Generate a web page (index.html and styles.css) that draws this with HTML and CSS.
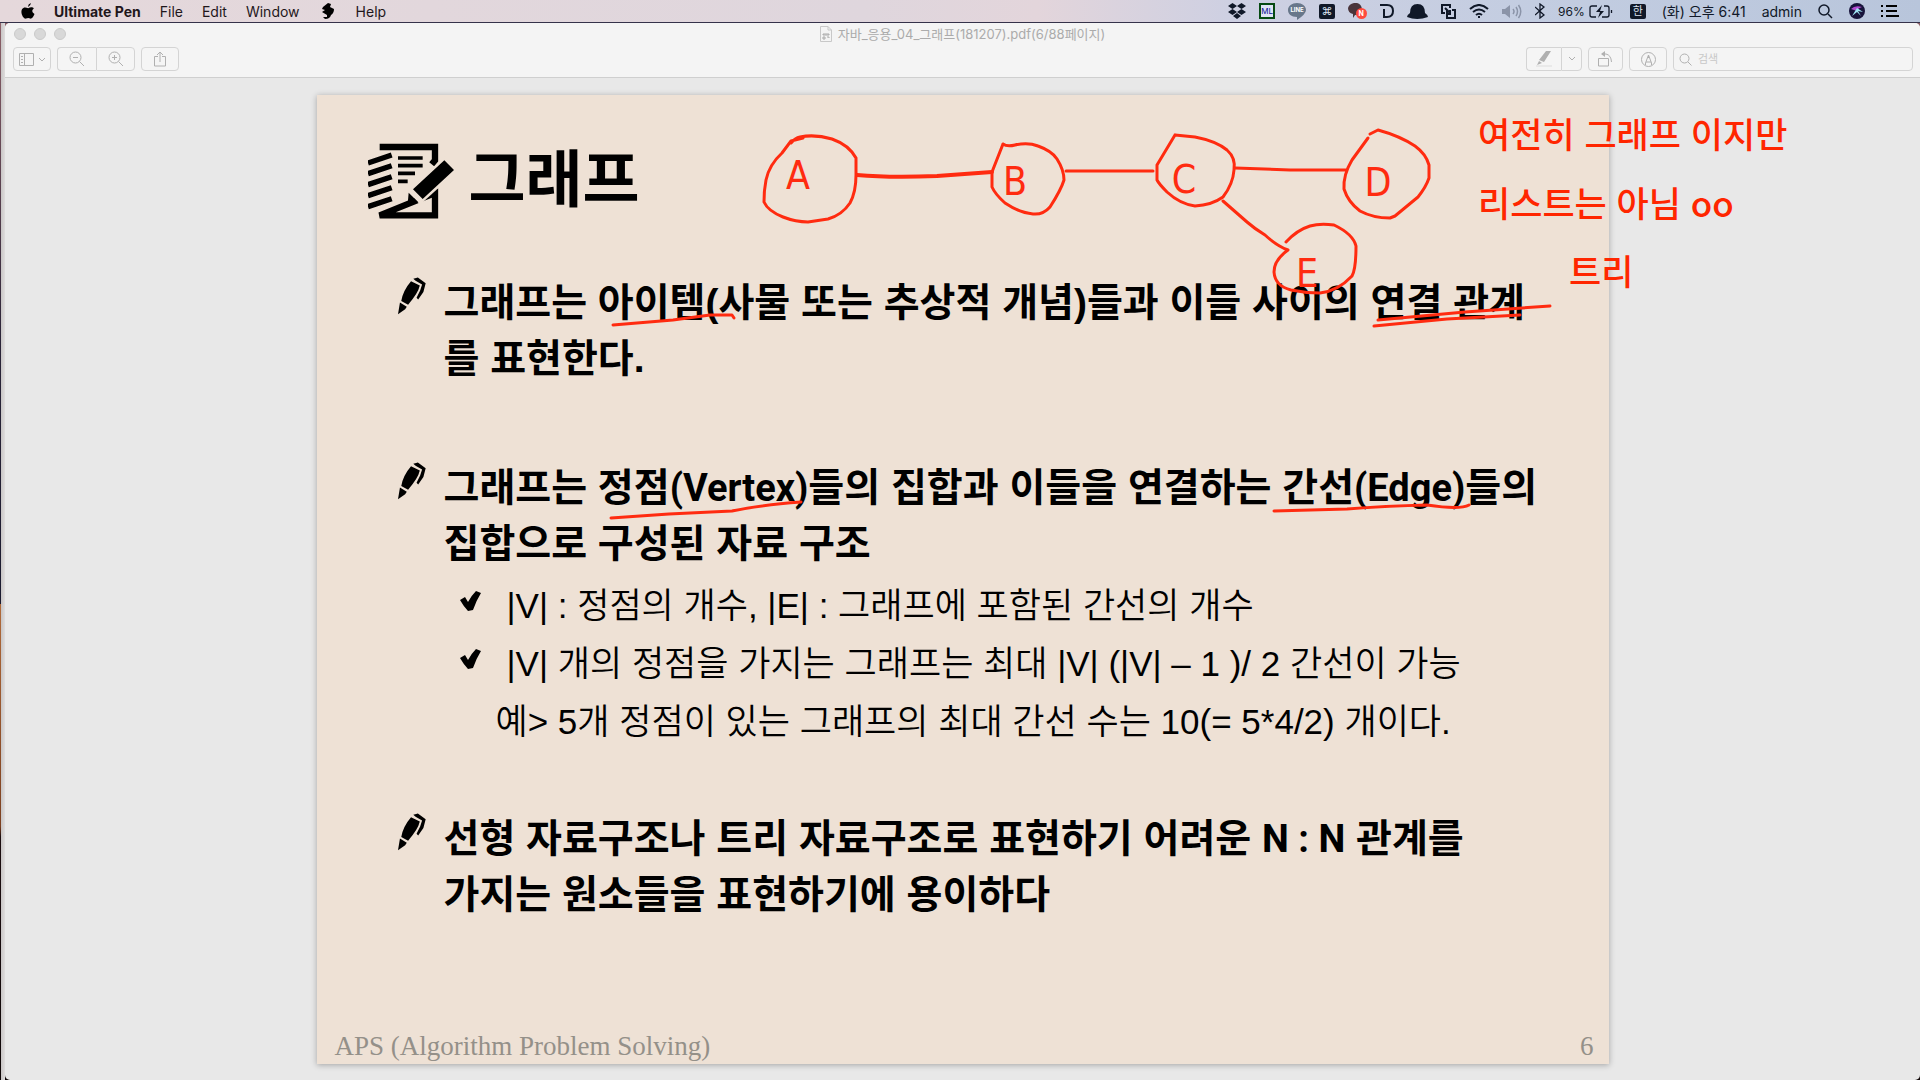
FILE: index.html
```html
<!DOCTYPE html>
<html lang="ko">
<head>
<meta charset="utf-8">
<meta name="viewport" content="width=device-width, initial-scale=1">
<title>자바_응용_04_그래프(181207).pdf</title>
<link rel="stylesheet" href="styles.css">
</head>
<body>
<svg class="defs" aria-hidden="true">
  <symbol id="pen" viewBox="174 500 86 114">
    <path d="M214 512 241 525Q236 548 205 584L184 572Q190 540 214 512ZM221 504 235 500 259 518 252 545 236 568 231 562 242 540 248 522 228 510ZM180 577 201 590 196 598 174 613Z"/>
  </symbol>
  <symbol id="check" viewBox="0 0 21 20">
    <path d="M0 9 5 6 8 11Q11 5 16 0L21 2Q16 10 13 19L8 20Q4 16 0 9Z"/>
  </symbol>
</svg>

<header class="menubar">
  <nav class="menus" aria-label="메뉴">
    <a href="#" aria-label="Apple"><svg width="14" height="16" viewBox="0 0 14 16"><path d="M9.8 0Q10 2.600 7 4 6.800 1.400 9.800 0ZM12.800 5.400Q9.300 8.200 13.500 11 11.500 16 9.300 15.600 7.200 14.600 5 15.600C2.500 16.500-1 9.600 1 6.300 2.700 3.600 5 4.500 7.200 5.200 9 4.300 11.500 3.800 12.800 5.400Z"/></svg></a>
    <a href="#" class="app">Ultimate Pen</a>
    <a href="#">File</a>
    <a href="#">Edit</a>
    <a href="#">Window</a>
    <a href="#" class="brush" aria-label="Pen"><svg width="12" height="16" viewBox="0 0 12 16"><path d="M1 4 6 0 9 1 8 4 12 6Q12 10 9 12 8 16 3 16L1 14 5 14 5 12 0 9 3 7 0 6Z"/></svg></a>
    <a href="#">Help</a>
  </nav>
  <div class="status">
    <div class="tray">
      <svg width="18" height="16" viewBox="0 0 18 16"><path d="M4.500 0 9 3 4.500 6 0 3ZM13.500 0 18 3 13.500 6 9 3ZM4.500 6 9 9 4.500 12 0 9ZM13.500 6 18 9 13.500 12 9 9ZM9 10 13 13 9 16 5 13Z"/></svg>
      <span class="ml">ML</span>
      <span class="line"><svg width="18" height="17" viewBox="0 0 18 17"><path d="M9 0C14 0 18 3 18 7Q18 11 9 17V14C3 14 0 11 0 7S4 0 9 0Z" fill="#68778a"/></svg><b>LINE</b></span>
      <span class="cmd">⌘</span>
      <span class="talk"><svg width="19" height="17" viewBox="0 0 19 17"><path d="M6 0Q13-1 14 6 13 12 7 12L5 15V11Q0 10 0 5 1 1 6 0Z" fill="#49343a"/><circle cx="13.500" cy="10.500" r="5.500" fill="#ff4a3d"/></svg><b>N</b></span>
      <svg width="14" height="14" viewBox="0 0 14 14" fill="none" stroke="#101828" stroke-width="2"><path d="M0 1H7Q13 1 13 7T7 13H4V5"/></svg>
      <svg width="21" height="15" viewBox="0 0 21 15"><path d="M3 9Q3 0 10.500 0T18 9Q21 11 21 13 10 17 0 13 0 11 3 9Z"/></svg>
      <svg width="15" height="15" viewBox="0 0 15 15" fill="none" stroke="#101828" stroke-width="2"><path d="M4 9H1V1H9V4M6 6V14H14V6H11M4 4 9 9M9 6V10H5"/></svg>
      <svg width="20" height="15" viewBox="0 0 20 15" fill="none" stroke="#101828" stroke-width="2"><path d="M1 5Q10-3 19 5M4 8Q10 3 16 8M7 11Q10 8.500 13 11M9 13H11"/></svg>
      <svg width="20" height="15" viewBox="0 0 20 15" fill="none" stroke="#8b94a8" stroke-width="1.500"><path d="M0 5H3L8 1V14L3 10H0Z" fill="#8b94a8" stroke="none"/><path d="M11 5Q13 7.500 11 10M14 3Q17 7.500 14 12M16.500 1Q21 7.500 16.500 14"/></svg>
      <svg width="10" height="16" viewBox="0 0 10 16" fill="none" stroke="#101828" stroke-width="1.300"><path d="M0 4 9 12 5 15V1L9 4 0 12"/></svg>
      <span class="power"><span>96%</span><svg width="24" height="13" viewBox="0 0 24 13" fill="none" stroke="#101828" stroke-width="1.300"><path d="M8 1H3Q1 1 1 3V10Q1 12 3 12H7M15 1H18Q20 1 20 3V10Q20 12 18 12H13"/><path d="M13 0 7 7H11L9 13 15 6H11Z" fill="#101828" stroke="none"/><path d="M22.500 5V8"/></svg></span>
    </div>
    <div class="clock">
      <span class="ime">한</span>
      <span>(화) 오후 6:41</span>
      <span>admin</span>
      <svg width="15" height="15" viewBox="0 0 15 15" fill="none" stroke="#101828" stroke-width="1.500"><circle cx="6" cy="6" r="5"/><path d="m10 10 4 4"/></svg>
      <svg width="16" height="16" viewBox="0 0 16 16"><circle cx="8" cy="8" r="8" fill="#17133a"/><path d="M2 6Q6 2 13 4 9 5 8 8Z" fill="#b04ad0"/><path d="M3 13 8 5 14 9 9 8 12 13 8 9Z" fill="#9fe6f4"/></svg>
      <svg width="18" height="12" viewBox="0 0 18 12" stroke="#000" stroke-width="2"><path d="M0 1H2M5 1H16M0 6H2M5 6H16M0 11H2M5 11H18"/></svg>
    </div>
  </div>
</header>

<div class="desktop">
  <main class="window">
    <header class="chrome">
      <div class="titlebar">
        <div class="lights"><button aria-label="닫기"></button><button aria-label="최소화"></button><button aria-label="확대"></button></div>
        <h1 class="doc-title"><svg width="12" height="16" viewBox="0 0 12 16" fill="none" stroke="#c8c8c8"><path d="M.5.5H8L11.500 4V15.500H.5ZM8 .5V4H11.500"/><path d="M3 8H9V9H3ZM3 11H5V13H3ZM7 11H9V12" stroke="#aaa"/></svg>자바_응용_04_그래프(181207).pdf(6/88페이지)</h1>
      </div>
      <div class="toolbar">
        <button class="tool tool-m" aria-label="사이드바"><svg width="27" height="13" viewBox="0 0 27 13"><path d="M.5.5H14.500V12.500H.5ZM5.500.5V12.500M2 3.500H4M2 6.500H4M2 9.500H4M20 5 23 8 26 5"/></svg></button>
        <div class="segment">
          <button class="tool tool-m" aria-label="축소"><svg width="16" height="16" viewBox="0 0 16 16"><circle cx="6.500" cy="6.500" r="5.500"/><path d="M4 6.500H9M10.500 10.500 15 15"/></svg></button>
          <button class="tool tool-m" aria-label="확대"><svg width="16" height="16" viewBox="0 0 16 16"><circle cx="6.500" cy="6.500" r="5.500"/><path d="M4 6.500H9M6.500 4V9M10.500 10.500 15 15"/></svg></button>
        </div>
        <button class="tool tool-m" aria-label="공유"><svg width="12" height="16" viewBox="0 0 12 16"><path d="M4 5.500H.5V15H11.500V5.500H8M6 11V1M3 4 6 1 9 4"/></svg></button>
        <span class="spacer"></span>
        <div class="segment">
          <button class="tool tool-s" aria-label="하이라이트"><svg width="18" height="16" viewBox="0 0 18 16"><path d="M11 0H16L9 11 4 9ZM4 10 7 12 2 14Z" fill="#b0b0b0" stroke="none"/><path d="M1 15H17" stroke="#ddd"/></svg></button>
          <button class="tool tool-xs" aria-label="색상"><svg width="8" height="6" viewBox="0 0 8 6"><path d="M1 1 4 4 7 1"/></svg></button>
        </div>
        <button class="tool tool-s" aria-label="회전"><svg width="15" height="16" viewBox="0 0 15 16"><path d="M.5 7.500H10.500V15H.5ZM4 3H8Q13 4 13.500 11"/><path d="M3 3 7 0V6Z" fill="#b0b0b0" stroke="none"/></svg></button>
        <button class="tool tool-m" aria-label="마크업"><svg width="15" height="15" viewBox="0 0 15 15"><circle cx="7.500" cy="7.500" r="7"/><path d="M4.500 13V11L7.500 3 10.500 11V13M5 10H10M7.500 3V6"/></svg></button>
        <label class="search"><svg width="13" height="13" viewBox="0 0 13 13"><circle cx="5.500" cy="5.500" r="4.500"/><path d="M9 9 12.500 12.500"/></svg><input type="search" placeholder="검색" aria-label="검색"></label>
      </div>
    </header>

    <section class="canvas">
      <article class="page">
        <div class="heading">
          <svg width="87" height="77" viewBox="84 100 261 231" aria-hidden="true"><path d="M119 112H285V152L275 164M285 250V317H119Z" fill="none" stroke="#000" stroke-width="19"/><path d="M84 160 155 136M84 192 155 168M84 225 155 201M84 258 155 234M84 291 155 267" stroke="#000" stroke-width="16"/><path d="M174 145H248M174 168H248M174 191H225M174 215H203" stroke="#000" stroke-width="11"/><path d="M315 140 354 182 240 285 205 246Z" fill="#eee1d5"/><path d="M313 152 342 181 248 268 219 239ZM206 249 235 278 203 282Z"/></svg>
          <h2>그래프</h2>
        </div>

        <ul class="points">
          <li class="point point-open"><svg class="pen"><use href="#pen"/></svg><p>그래프는 아이템(사물 또는 추상적 개념)들과 이들 사이의 연결 관계<br>를 표현한다.</p></li>
          <li class="point"><svg class="pen"><use href="#pen"/></svg>
            <div>
              <p>그래프는 정점<span class="latin">(Vertex)</span>들의 집합과 이들을 연결하는 간선<span class="latin">(Edge)</span>들의<br>집합으로 구성된 자료 구조</p>
              <ul class="details">
                <li><svg class="check"><use href="#check"/></svg>|V| : 정점의 개수, |E| : 그래프에 포함된 간선의 개수</li>
                <li><svg class="check"><use href="#check"/></svg>|V| 개의 정점을 가지는 그래프는 최대 |V| (|V| – 1 )/ 2 간선이 가능</li>
                <li class="example">예&gt; 5개 정점이 있는 그래프의 최대 간선 수는 10(= 5*4/2) 개이다.</li>
              </ul>
            </div>
          </li>
          <li class="point"><svg class="pen"><use href="#pen"/></svg><p>선형 자료구조나 트리 자료구조로 표현하기 어려운 <span class="latin">N : N</span> 관계를<br>가지는 원소들을 표현하기에 용이하다</p></li>
        </ul>

        <footer class="page-foot"><span>APS (Algorithm Problem Solving)</span><span>6</span></footer>

        <svg class="ink" viewBox="317 95 1292 969">
          <g class="strokes">
            <path d="M803 138 791 141 782 153Q769 165 766 180 764 190 764 202 768 211 783 217 796 222 808 222L828 219Q842 215 850 203 856 192 856 175V158Q849 145 832 139 815 134 800 137 795 138 791 143"/>
            <path d="M857 175Q890 178 937 176L992 172" stroke-width="4"/>
            <path d="M1003 144Q1007 147 1015 145 1028 142 1038 146 1052 151 1057 159 1064 170 1064 180 1061 190 1050 207 1043 215 1033 214 1020 213 1005 203 995 194 992 187L992 172 1003 144"/>
            <path d="M1066 171H1153"/>
            <path d="M1175 135 1195 137Q1216 141 1227 150 1236 158 1234 170 1233 184 1223 197 1212 205 1195 206 1180 204 1167 192 1159 184 1157 180V165L1175 135"/>
            <path d="M1235 168 1290 170H1346"/>
            <path d="M1368 138 1352 160Q1343 175 1344 189 1348 202 1360 211 1373 218 1390 218L1395 216 1418 197Q1426 187 1429 178V165Q1426 154 1415 146 1400 136 1378 130L1370 134"/>
            <path d="M1223 201 1247 222Q1255 229 1265 235 1277 246 1288 250 1274 260 1274 272 1275 286 1291 290 1305 293 1320 293 1338 291 1352 276 1356 269 1356 246 1353 234 1334 225 1320 223 1310 226 1297 230 1286 242"/>
            <path d="M613 325 673 320 710 315H732L734 318M1378 320 1465 312 1550 306M1374 326 1447 319 1520 315M611 518 669 514 732 511Q760 505 801 502M1274 511 1347 509Q1385 506 1427 505 1460 510 1469 505"/>
          </g>
          <g class="labels">
            <text x="798" y="189">A</text><text x="1015" y="195">B</text><text x="1184" y="193">C</text><text x="1378" y="196">D</text><text x="1307" y="287">E</text>
          </g>
          <g class="notes">
            <text x="1478" y="148">여전히 그래프 이지만</text>
            <text x="1478" y="217">리스트는 아님 oo</text>
            <text x="1569" y="285">트리</text>
          </g>
        </svg>
      </article>
    </section>
  </main>
</div>
</body>
</html>
```
FILE: styles.css
```css
* { box-sizing: border-box; }

body {
  margin: 0;
  min-height: 100vh;
  display: flex;
  flex-direction: column;
  font-family: Inter, "Noto Sans CJK KR", sans-serif;
  font-size: 13px;
  color: #000;
  overflow-x: hidden;
}

ul, h1, h2, p { margin: 0; padding: 0; list-style: none; }
svg { flex: none; display: block; }
.defs { position: absolute; width: 0; height: 0; }

/* Menu bar */
.menubar {
  height: 23px;
  padding: 0 21px;
  display: flex;
  justify-content: space-between;
  align-items: center;
  background: linear-gradient(90deg, #e5d8db 0%, #dfd6dd 45%, #e3d5db 54%, #ced0e2 64%, #c3cde1 80%, #b8c5db 100%);
  border-bottom: 1px solid #35324a;
  color: #101828;
  white-space: nowrap;
}
.menus, .tray, .clock, .power { display: flex; align-items: center; }
.menus { gap: 19px; font-size: 14px; }
.menus a { color: #1f171b; text-decoration: none; }
.menus .app { font-weight: 700; }
.menus .brush { margin: 0 3px; }
.status { display: flex; gap: 17px; font-size: 14px; fill: #101828; }
.tray { gap: 13px; }
.clock { gap: 16px; }
.power { gap: 4px; font-size: 12px; }
.ml {
  width: 16px;
  height: 16px;
  border: 2px solid #064a12;
  background: #dfe3f5;
  color: #0a1090;
  font-size: 8px;
  line-height: 12px;
  text-align: center;
}
.line, .talk { position: relative; color: #fff; }
.line b { position: absolute; inset: 2px 0 auto; font-size: 6px; line-height: 10px; text-align: center; }
.talk b { position: absolute; right: 2px; bottom: 2px; width: 8px; font-size: 7px; line-height: 9px; text-align: center; }
.cmd, .ime {
  width: 16px;
  height: 15px;
  border-radius: 2px;
  background: #101828;
  color: #dce3f0;
  font-size: 11px;
  line-height: 14px;
  text-align: center;
}

/* Desktop and window */
.desktop {
  flex: 1;
  display: flex;
  padding-left: 5px;
  background: linear-gradient(90deg, transparent 1px, #c9c6c6 1px, #dedcdc 5px, transparent 5px), linear-gradient(#8c6068 0%, #2b2438 30%, #1b1b30 55%, #b06a3a 55%, #7c4020 76%, #1c0d10 77%, #100808 100%);
}
.window {
  flex: 1;
  min-width: 0;
  display: flex;
  flex-direction: column;
  border-radius: 5px;
  background: #e8e8e8;
  overflow: hidden;
}
.chrome { background: #f4f4f4; border-bottom: 1px solid #cfcfcf; }
.titlebar { height: 22px; padding: 0 9px; display: grid; grid-template-columns: 1fr auto 1fr; align-items: center; }
.lights { display: flex; gap: 8px; }
.lights button { width: 12px; height: 12px; padding: 0; border: 1px solid #cacaca; border-radius: 50%; background: #d8d8d8; }
.doc-title { display: flex; align-items: center; gap: 6px; font-size: 13px; line-height: 20px; font-weight: 400; color: #ababab; }
.toolbar { display: flex; gap: 6px; padding: 2px 7px 6px 8px; }
.tool {
  height: 24px;
  padding: 0;
  display: flex;
  align-items: center;
  justify-content: center;
  border: 1px solid #d4d4d4;
  border-radius: 4px;
  background: #f5f5f5;
}
.tool svg, .search svg { fill: none; stroke: #b0b0b0; }
.tool-m { width: 38px; }
.tool-s { width: 35px; }
.tool-xs { width: 21px; }
.segment { display: flex; }
.segment .tool-m { width: 39px; }
.segment .tool:first-child { border-radius: 4px 0 0 4px; border-right: 0; }
.segment .tool:last-child { border-radius: 0 4px 4px 0; }
.spacer { flex: 1; }
.search {
  width: 240px;
  height: 24px;
  padding: 0 5px;
  display: flex;
  align-items: center;
  gap: 6px;
  border: 1px solid #d4d4d4;
  border-radius: 4px;
}
.search input { flex: 1; min-width: 0; border: 0; padding: 0; background: none; font: inherit; font-size: 11px; outline: 0; }
.search input::placeholder { color: #c8c8c8; }

/* Document page */
.canvas { padding: 17px 24px 16px; }
.page {
  position: relative;
  max-width: 1292px;
  aspect-ratio: 4 / 3;
  margin: 0 auto;
  padding-top: 48px;
  display: flex;
  flex-direction: column;
  background: #eee1d5;
  box-shadow: 0 1px 6px rgba(0, 0, 0, .3);
}
.heading { height: 77px; padding-left: 51px; display: flex; align-items: flex-start; gap: 14px; }
.heading h2 { font: 700 62px/64px "Noto Sans CJK KR", sans-serif; }
.points { margin-top: 55px; padding-left: 81px; display: flex; flex-direction: column; gap: 60px; }
.point { display: flex; align-items: flex-start; gap: 18px; font: 700 39px/56px "Liberation Sans", "Noto Sans CJK KR", sans-serif; white-space: nowrap; }
.point-open { margin-bottom: 13px; }
.latin { font-family: Roboto, sans-serif; font-size: 38px; line-height: 1; }
.pen { width: 28px; height: 38px; margin-top: 2px; }
.details { margin-top: 5px; padding-left: 16px; font: 350 35px/58px "Liberation Sans", "Noto Sans CJK KR", sans-serif; }
.details li { display: flex; align-items: center; gap: 26px; }
.details .example { padding-left: 36px; }
.check { width: 21px; height: 20px; margin-bottom: 10px; }
.page-foot {
  margin-top: auto;
  padding: 0 15px 2px 18px;
  display: flex;
  justify-content: space-between;
  font: 27px/32px "Liberation Serif", serif;
  color: #949089;
}

/* Pen annotations over the page */
.ink { position: absolute; inset: 0; width: 100%; height: 100%; overflow: visible; pointer-events: none; }
.strokes { fill: none; stroke: #ff2b10; stroke-width: 3; stroke-linecap: round; stroke-linejoin: round; }
.labels { font: 39px "Liberation Sans Narrow", "DejaVu Sans Condensed", sans-serif; text-anchor: middle; fill: #ff2b10; }
.notes { font: 500 35px "Noto Sans CJK KR", sans-serif; fill: #ff2600; }
```
